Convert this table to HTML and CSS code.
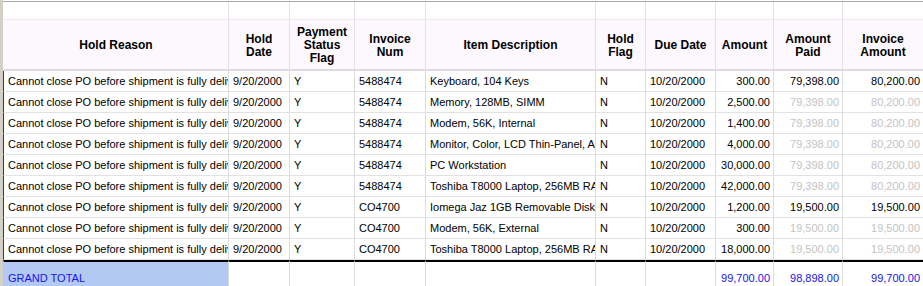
FILE: index.html
```html
<!DOCTYPE html>
<html>
<head>
<meta charset="utf-8">
<link rel="stylesheet" href="styles.css">
</head>
<body>
<div class="sheet">
  <div class="gutter"></div>
  <div class="grid">
    <div class="row band">
      <div class="c"></div><div class="c"></div><div class="c"></div><div class="c"></div><div class="c"></div>
      <div class="c"></div><div class="c"></div><div class="c"></div><div class="c"></div><div class="c"></div>
    </div>
    <div class="row head">
      <div class="c">Hold Reason</div>
      <div class="c">Hold<br>Date</div>
      <div class="c">Payment<br>Status<br>Flag</div>
      <div class="c">Invoice<br>Num</div>
      <div class="c">Item Description</div>
      <div class="c">Hold<br>Flag</div>
      <div class="c">Due Date</div>
      <div class="c">Amount</div>
      <div class="c">Amount<br>Paid</div>
      <div class="c">Invoice<br>Amount</div>
    </div>
    <div class="row data">
      <div class="c">Cannot close PO before shipment is fully delivered</div>
      <div class="c">9/20/2000</div><div class="c">Y</div><div class="c">5488474</div>
      <div class="c">Keyboard, 104 Keys</div><div class="c">N</div><div class="c">10/20/2000</div>
      <div class="c num">300.00</div><div class="c num">79,398.00</div><div class="c num">80,200.00</div>
    </div>
    <div class="row data">
      <div class="c">Cannot close PO before shipment is fully delivered</div>
      <div class="c">9/20/2000</div><div class="c">Y</div><div class="c">5488474</div>
      <div class="c">Memory, 128MB, SIMM</div><div class="c">N</div><div class="c">10/20/2000</div>
      <div class="c num">2,500.00</div><div class="c num dim">79,398.00</div><div class="c num dim">80,200.00</div>
    </div>
    <div class="row data">
      <div class="c">Cannot close PO before shipment is fully delivered</div>
      <div class="c">9/20/2000</div><div class="c">Y</div><div class="c">5488474</div>
      <div class="c">Modem, 56K, Internal</div><div class="c">N</div><div class="c">10/20/2000</div>
      <div class="c num">1,400.00</div><div class="c num dim">79,398.00</div><div class="c num dim">80,200.00</div>
    </div>
    <div class="row data">
      <div class="c">Cannot close PO before shipment is fully delivered</div>
      <div class="c">9/20/2000</div><div class="c">Y</div><div class="c">5488474</div>
      <div class="c">Monitor, Color, LCD Thin-Panel, Active Matrix</div><div class="c">N</div><div class="c">10/20/2000</div>
      <div class="c num">4,000.00</div><div class="c num dim">79,398.00</div><div class="c num dim">80,200.00</div>
    </div>
    <div class="row data">
      <div class="c">Cannot close PO before shipment is fully delivered</div>
      <div class="c">9/20/2000</div><div class="c">Y</div><div class="c">5488474</div>
      <div class="c">PC Workstation</div><div class="c">N</div><div class="c">10/20/2000</div>
      <div class="c num">30,000.00</div><div class="c num dim">79,398.00</div><div class="c num dim">80,200.00</div>
    </div>
    <div class="row data">
      <div class="c">Cannot close PO before shipment is fully delivered</div>
      <div class="c">9/20/2000</div><div class="c">Y</div><div class="c">5488474</div>
      <div class="c">Toshiba T8000 Laptop, 256MB RAM</div><div class="c">N</div><div class="c">10/20/2000</div>
      <div class="c num">42,000.00</div><div class="c num dim">79,398.00</div><div class="c num dim">80,200.00</div>
    </div>
    <div class="row data">
      <div class="c">Cannot close PO before shipment is fully delivered</div>
      <div class="c">9/20/2000</div><div class="c">Y</div><div class="c">CO4700</div>
      <div class="c">Iomega Jaz 1GB Removable Disk, 1GB</div><div class="c">N</div><div class="c">10/20/2000</div>
      <div class="c num">1,200.00</div><div class="c num">19,500.00</div><div class="c num">19,500.00</div>
    </div>
    <div class="row data">
      <div class="c">Cannot close PO before shipment is fully delivered</div>
      <div class="c">9/20/2000</div><div class="c">Y</div><div class="c">CO4700</div>
      <div class="c">Modem, 56K, External</div><div class="c">N</div><div class="c">10/20/2000</div>
      <div class="c num">300.00</div><div class="c num dim">19,500.00</div><div class="c num dim">19,500.00</div>
    </div>
    <div class="row data">
      <div class="c">Cannot close PO before shipment is fully delivered</div>
      <div class="c">9/20/2000</div><div class="c">Y</div><div class="c">CO4700</div>
      <div class="c">Toshiba T8000 Laptop, 256MB RAM</div><div class="c">N</div><div class="c">10/20/2000</div>
      <div class="c num">18,000.00</div><div class="c num dim">19,500.00</div><div class="c num dim">19,500.00</div>
    </div>
    <div class="row total">
      <div class="c label">GRAND TOTAL</div>
      <div class="c"></div><div class="c"></div><div class="c"></div><div class="c"></div><div class="c"></div><div class="c"></div>
      <div class="c num">99,700.00</div><div class="c num">98,898.00</div><div class="c num">99,700.00</div>
    </div>
  </div>
</div>
</body>
</html>
```
FILE: styles.css
```css
html, body {
  margin: 0;
  padding: 0;
  background: #ffffff;
  overflow: hidden;
}

body {
  font-family: "Liberation Sans", Arial, sans-serif;
  color: #000;
}

.sheet {
  display: flex;
  height: 286px;
}

.gutter {
  flex: none;
  width: 3px;
  background: #d4d0c8;
}

.grid {
  flex: 1;
  margin-top: 1px;
  border-top: 1px solid #a8a8a8;
}

.row {
  display: grid;
  grid-template-columns: 226px 61px 65px 71px 170px 50px 70px 58px 69px 80px;
}

.c {
  box-sizing: border-box;
  border-right: 1px solid #dcdcdc;
  overflow: hidden;
  white-space: nowrap;
}

.c:first-child {
  border-left: 1px solid #dcdcdc;
}

.c:last-child {
  border-right: none;
}

/* top white band */
.band .c {
  height: 18px;
  background: #ffffff;
  border-bottom: 1px solid #efe9ef;
  border-right-color: #e6e0e6;
}

.band .c:first-child {
  border-left-color: #ffffff;
}

/* header */
.head .c {
  height: 51px;
  background: #fdf8fd;
  border-bottom: 2px solid #dedade;
  border-right-color: #e6e0e6;
  display: flex;
  align-items: center;
  justify-content: center;
  text-align: center;
  font-weight: bold;
  font-size: 12px;
  line-height: 13px;
  padding-top: 2px;
}

.head .c:first-child {
  border-left-color: #fdf8fd;
}

/* data rows */
.data .c {
  height: 21px;
  border-bottom: 1px solid #e2e2e2;
  font-size: 11px;
  line-height: 20px;
  padding: 0 0 0 4px;
}

.data .c:first-child {
  border-left-color: #3a3a3a;
}

.data .num,
.total .num {
  text-align: right;
  padding: 0 3px 0 0;
}

.dim {
  color: #c3c3c3;
}

/* grand total */
.total .c {
  height: 34px;
  border-top: 2px solid #000000;
  font-size: 11px;
  line-height: 32px;
  color: #1414f0;
  padding-left: 4px;
}

.total .label {
  background: #b4c8f4;
  border-left-color: #b4c8f4;
}
```
